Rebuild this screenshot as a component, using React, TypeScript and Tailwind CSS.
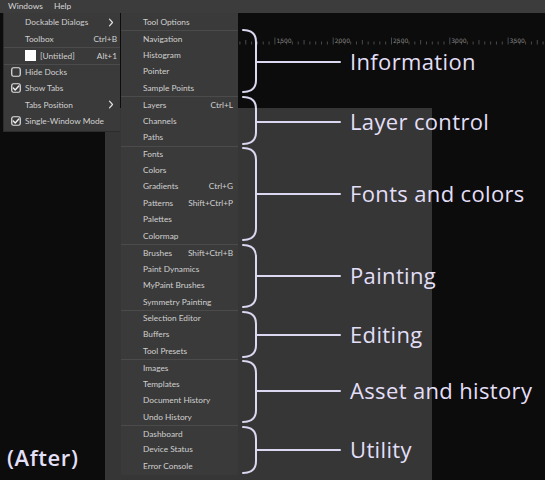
import React from "react";

type MainItem = {
  label: string;
  kind?: "check" | "uncheck" | "swatch";
  shortcut?: string;
  sub?: boolean;
  sep?: boolean;
};

const mainItems: MainItem[] = [
  { label: "Dockable Dialogs", sub: true },
  { label: "Toolbox", shortcut: "Ctrl+B" },
  { label: "[Untitled]", kind: "swatch", shortcut: "Alt+1", sep: true },
  { label: "Hide Docks", kind: "uncheck", sep: true },
  { label: "Show Tabs", kind: "check" },
  { label: "Tabs Position", sub: true },
  { label: "Single-Window Mode", kind: "check" },
];

const groups: { label: string; shortcut?: string }[][] = [
  [{ label: "Tool Options" }],
  [{ label: "Navigation" }, { label: "Histogram" }, { label: "Pointer" }, { label: "Sample Points" }],
  [{ label: "Layers", shortcut: "Ctrl+L" }, { label: "Channels" }, { label: "Paths" }],
  [
    { label: "Fonts" },
    { label: "Colors" },
    { label: "Gradients", shortcut: "Ctrl+G" },
    { label: "Patterns", shortcut: "Shift+Ctrl+P" },
    { label: "Palettes" },
    { label: "Colormap" },
  ],
  [
    { label: "Brushes", shortcut: "Shift+Ctrl+B" },
    { label: "Paint Dynamics" },
    { label: "MyPaint Brushes" },
    { label: "Symmetry Painting" },
  ],
  [{ label: "Selection Editor" }, { label: "Buffers" }, { label: "Tool Presets" }],
  [{ label: "Images" }, { label: "Templates" }, { label: "Document History" }, { label: "Undo History" }],
  [{ label: "Dashboard" }, { label: "Device Status" }, { label: "Error Console" }],
];

const braces = [
  { top: 30, bottom: 92, mid: 62, label: "Information" },
  { top: 97, bottom: 144, mid: 122, label: "Layer control" },
  { top: 148, bottom: 240, mid: 194, label: "Fonts and colors" },
  { top: 245, bottom: 307, mid: 276, label: "Painting" },
  { top: 312, bottom: 357, mid: 335, label: "Editing" },
  { top: 361, bottom: 422, mid: 391, label: "Asset and history" },
  { top: 427, bottom: 473, mid: 450, label: "Utility" },
];

function Check({ checked }: { checked: boolean }) {
  return (
    <svg width="10" height="10" viewBox="0 0 10 10" className="shrink-0">
      <rect x="0.75" y="0.75" width="8.5" height="8.5" rx="1.8" fill="none" stroke="#e4e4e4" strokeWidth="1.2" />
      {checked && (
        <path d="M2.3 5.1 L4.2 7 L7.8 3" fill="none" stroke="#f2f2f2" strokeWidth="1.4" strokeLinecap="round" strokeLinejoin="round" />
      )}
    </svg>
  );
}

function Chevron() {
  return (
    <svg width="6" height="9" viewBox="0 0 6 9" className="shrink-0">
      <path d="M1.5 1.2 L4.5 4.5 L1.5 7.8" fill="none" stroke="#e0e0e0" strokeWidth="1.2" strokeLinecap="round" strokeLinejoin="round" />
    </svg>
  );
}

function Ruler() {
  const ticks: React.ReactNode[] = [];
  const step = 58.3 / 10;
  for (let i = 0; i < 100; i++) {
    const x = 100 + i * step;
    if (x > 545) break;
    if (x < 239) continue;
    const major = i % 10 === 0;
    const half = i % 5 === 0;
    ticks.push(
      <line key={i} x1={x} x2={x} y1={major ? 1.5 : half ? 4 : 5.5} y2={8.5} stroke="#666666" strokeWidth="0.7" />
    );
    if (major) {
      ticks.push(
        <text key={"t" + i} x={x + 1.5} y={7.3} fontSize="6" fill="#858585" fontFamily="DejaVu Sans, sans-serif">
          {(i / 10) * 500}
        </text>
      );
    }
  }
  return (
    <svg width="545" height="10" className="block">
      {ticks}
    </svg>
  );
}

export default function App() {
  return (
    <div className="relative w-[545px] h-[480px] overflow-hidden bg-[#0c0c0c] font-['Lato',sans-serif] flex flex-col">
      {/* menubar */}
      <div className="h-[13px] shrink-0 bg-[#3c3c3c] flex items-center text-[8.4px] text-[#d6d6d6] leading-none">
        <span className="ml-[8px]">Windows</span>
        <span className="ml-[11px]">Help</span>
      </div>

      {/* body */}
      <div className="flex-1 flex flex-col">
        <div className="h-[23px] shrink-0" />
        <Ruler />
        <div className="h-[62px] shrink-0" />
        <div className="flex-1 ml-[105px] w-[327px] bg-[#363636]" />
      </div>

      {/* main menu */}
      <div className="absolute left-[3px] top-[13px] w-[117px] pt-[1px] pb-[1px] bg-[#3a3a3a] border-b border-l border-[#2c2c2c] text-[8.3px] text-[#d0d0d0] leading-none">
        {mainItems.map((it) => (
          <div
            key={it.label}
            className={`h-[16.5px] flex items-center pr-[3px] ${it.sep ? "border-t border-[#4b4b4b]" : ""}`}
          >
            <div className="w-[21px] shrink-0 pl-[7px] flex items-center">
              {it.kind === "check" && <Check checked />}
              {it.kind === "uncheck" && <Check checked={false} />}
            </div>
            {it.kind === "swatch" && <div className="w-[11px] h-[11px] bg-white mr-[4px] shrink-0" />}
            <span className="flex-1 whitespace-nowrap">{it.label}</span>
            {it.shortcut && <span className="whitespace-nowrap">{it.shortcut}</span>}
            {it.sub && (
              <span className="mr-[3px] flex items-center">
                <Chevron />
              </span>
            )}
          </div>
        ))}
      </div>

      {/* submenu */}
      <div className="absolute left-[121px] top-[13px] w-[117px] pt-[1px] pb-[1px] bg-[#3a3a3a] rounded-b-[2px] text-[8.3px] text-[#d0d0d0] leading-none">
        {groups.map((g, gi) =>
          g.map((it, ii) => (
            <div
              key={it.label}
              className={`h-[16.44px] flex items-center pl-[22px] pr-[5px] ${gi > 0 && ii === 0 ? "border-t border-[#4b4b4b]" : ""}`}
            >
              <span className="flex-1 whitespace-nowrap">{it.label}</span>
              {it.shortcut && <span className="whitespace-nowrap">{it.shortcut}</span>}
            </div>
          ))
        )}
      </div>

      {/* braces overlay */}
      <svg className="absolute left-0 top-0 pointer-events-none" width="545" height="480">
        {braces.map((b) => (
          <g key={b.label} fill="none" stroke="#dcd8f2" strokeWidth="2" strokeLinecap="round">
            <path
              d={`M243 ${b.top} Q256 ${b.top} 256 ${b.top + 12} L256 ${b.bottom - 12} Q256 ${b.bottom} 243 ${b.bottom}`}
            />
            <path d={`M256 ${b.mid} H340`} />
          </g>
        ))}
      </svg>

      {braces.map((b) => (
        <div
          key={b.label}
          className="absolute left-[350px] text-[22px] leading-[22px] tracking-[0.35px] text-[#e3dff6] whitespace-nowrap font-['Open_Sans',sans-serif]"
          style={{ top: b.mid - 12 }}
        >
          {b.label}
        </div>
      ))}

      <div className="absolute left-[7px] top-[444px] text-[22px] leading-[26px] font-semibold tracking-[0.6px] text-[#e3dff6] font-['Open_Sans',sans-serif]">
        (After)
      </div>
    </div>
  );
}
